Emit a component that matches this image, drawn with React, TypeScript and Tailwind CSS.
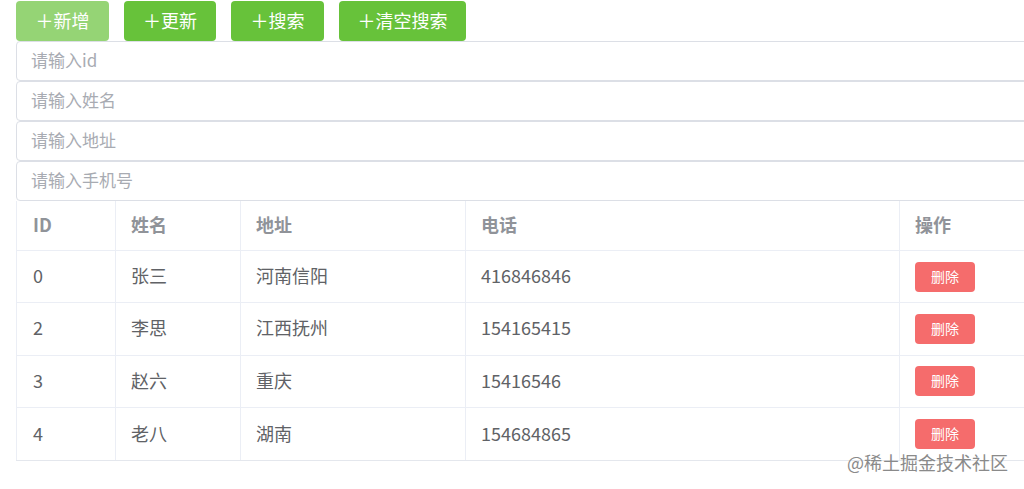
const rows = [
  { id: '0', name: '张三', addr: '河南信阳', phone: '416846846' },
  { id: '2', name: '李思', addr: '江西抚州', phone: '154165415' },
  { id: '3', name: '赵六', addr: '重庆', phone: '15416546' },
  { id: '4', name: '老八', addr: '湖南', phone: '154684865' },
];

const placeholders = ['请输入id', '请输入姓名', '请输入地址', '请输入手机号'];

const font = { fontFamily: '"Noto Sans CJK SC", "Liberation Sans", sans-serif' };

export default function App() {
  return (
    <div className="relative w-[1024px] h-[489px] overflow-hidden bg-white" style={font}>
      <div className="w-[1040px] pl-4">
        <div className="flex gap-[15px] pt-[1px] h-[41px]">
          <button className="h-10 w-[93px] rounded bg-[#95d475] text-white text-[18px] leading-none pb-[3px]">＋新增</button>
          <button className="h-10 w-[92px] rounded bg-[#67c23a] text-white text-[18px] leading-none pb-[3px]">＋更新</button>
          <button className="h-10 w-[93px] rounded bg-[#67c23a] text-white text-[18px] leading-none pb-[3px]">＋搜索</button>
          <button className="h-10 w-[127px] rounded bg-[#67c23a] text-white text-[18px] leading-none pb-[3px]">＋清空搜索</button>
        </div>
        {placeholders.map((p) => (
          <input
            key={p}
            placeholder={p}
            className="block w-full h-10 border border-[#dcdfe6] rounded px-[14px] pb-[4px] text-[17px] text-[#606266] placeholder:text-[#a8abb2] outline-none"
          />
        ))}
        <div className="grid grid-cols-[100px_125px_225px_434px_1fr] text-[18px] border-b border-[#e4e7ed]">
          {['ID', '姓名', '地址', '电话', '操作'].map((h, i) => (
            <div
              key={h}
              className={`h-[50px] flex items-center pb-[2px] font-bold text-[#909399] border-b border-[#ebeef5] ${i === 0 ? 'border-l pl-4' : 'pl-[15px]'} border-r border-[#ebeef5]`}
            >
              {h}
            </div>
          ))}
          {rows.map((r, ri) => (
            <div key={r.id} className="contents">
              {[r.id, r.name, r.addr, r.phone].map((c, i) => (
                <div
                  key={i}
                  className={`h-[52.3px] flex items-center pb-[2px] text-[#606266] border-r border-[#ebeef5] ${i === 0 ? 'border-l pl-4' : 'pl-[15px]'} ${ri < 3 ? 'border-b' : ''}`}
                >
                  {c}
                </div>
              ))}
              <div className={`h-[52.3px] flex items-center pl-[15px] border-r border-[#ebeef5] ${ri < 3 ? 'border-b' : ''}`}>
                <button className="w-[60px] h-[30px] rounded bg-[#f56c6c] text-white text-[14px] leading-none pb-[2px]">删除</button>
              </div>
            </div>
          ))}
        </div>
      </div>
      <div className="absolute left-[847px] top-[449px] text-[18px] text-[#8a8a8a]">@稀土掘金技术社区</div>
    </div>
  );
}
